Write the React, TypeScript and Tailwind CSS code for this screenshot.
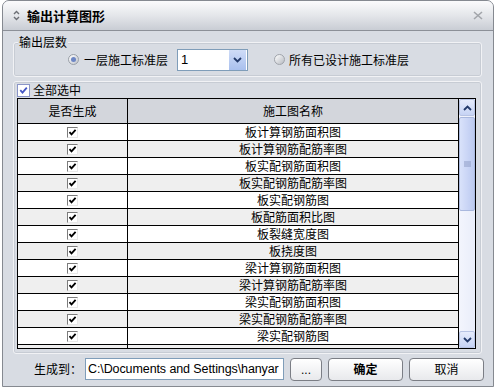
import React from "react";

const rows = [
  "板计算钢筋面积图",
  "板计算钢筋配筋率图",
  "板实配钢筋面积图",
  "板实配钢筋配筋率图",
  "板实配钢筋图",
  "板配筋面积比图",
  "板裂缝宽度图",
  "板挠度图",
  "梁计算钢筋面积图",
  "梁计算钢筋配筋率图",
  "梁实配钢筋面积图",
  "梁实配钢筋配筋率图",
  "梁实配钢筋图",
  "",
];

const cjk = { fontFamily: '"Noto Sans CJK SC", "Noto Sans", sans-serif' };

function SmallCheck() {
  return (
    <div className="w-[11px] h-[11px] bg-white border border-t-[#7c7c7c] border-l-[#7c7c7c] border-r-[#e8e8e8] border-b-[#e8e8e8] flex items-center justify-center">
      <svg width="9" height="9" viewBox="0 0 9 9">
        <path d="M1.5 4.2 L3.5 6.4 L7.6 1.8" stroke="#000" strokeWidth="1.8" fill="none" />
      </svg>
    </div>
  );
}

function Chevron({ up }: { up?: boolean }) {
  return (
    <svg width="9" height="6" viewBox="0 0 9 6">
      <path
        d={up ? "M1 5 L4.5 1.5 L8 5" : "M1 1 L4.5 4.5 L8 1"}
        stroke="#233a6a"
        strokeWidth="1.8"
        fill="none"
      />
    </svg>
  );
}

export default function App() {
  return (
    <div className="w-[496px] h-[389px] bg-white" style={cjk}>
      <div className="ml-[2px] w-[492px] h-[387px] border border-[#858990] rounded-t-[7px] overflow-hidden bg-[#d8dce3] flex flex-col">
        {/* Title bar */}
        <div className="h-[30px] shrink-0 border-b border-[#8c9098] bg-gradient-to-b from-[#fbfbfc] via-[#e4e6ea] to-[#c9cdd4] flex items-center">
          <svg className="ml-[10px]" width="7" height="11" viewBox="0 0 7 11">
            <path d="M1 4 L3.5 1.5 L6 4" stroke="#6c6f75" strokeWidth="1.4" fill="none" />
            <path d="M1 7 L3.5 9.5 L6 7" stroke="#6c6f75" strokeWidth="1.4" fill="none" />
          </svg>
          <span className="ml-[7px] text-[13px] font-bold text-black leading-none">输出计算图形</span>
          <div className="flex-1" />
          <svg className="mr-[10px]" width="10" height="9" viewBox="0 0 10 9">
            <path d="M1 1 L9 8 M9 1 L1 8" stroke="#a2a5aa" strokeWidth="1.6" />
          </svg>
        </div>

        {/* Body */}
        <div className="flex-1 pl-[10px] pr-[11px] flex flex-col">
          {/* Group 1 */}
          <div className="relative mt-[11px] h-[35px] border border-[#f1f2f5] rounded-[3px] shadow-[inset_0_0_0_1px_rgba(170,174,182,0.35)]">
            <span className="absolute left-[4px] top-[-9px] px-[1px] bg-[#d8dce3] text-[12px] leading-[16px] text-black">
              输出层数
            </span>
            <div className="h-full flex items-center pl-[54px] text-[12px] text-black">
              <div className="w-[11px] h-[11px] rounded-full border border-[#9aa0a8] bg-gradient-to-br from-white to-[#c0c4cc] flex items-center justify-center">
                <div className="w-[5px] h-[5px] rounded-full bg-[#6d86c4]" />
              </div>
              <span className="ml-[5px]">一层施工标准层</span>
              <div className="ml-[9px] w-[71px] h-[22px] border border-[#7f9db9] bg-white flex items-center">
                <span className="ml-[3px] text-[13px] leading-none" style={{ fontFamily: '"Liberation Sans", sans-serif' }}>
                  1
                </span>
                <div className="flex-1" />
                <div className="w-[17px] h-[20px] mr-[1px] bg-gradient-to-b from-[#cfdcf7] to-[#a9c0ee] flex items-center justify-center">
                  <Chevron />
                </div>
              </div>
              <div className="ml-[26px] w-[11px] h-[11px] rounded-full border border-[#a0a4ab] bg-gradient-to-br from-white to-[#b7bbc2]" />
              <span className="ml-[4px]">所有已设计施工标准层</span>
            </div>
          </div>

          {/* Group 2 */}
          <div className="mt-[4px] h-[273px] border border-[#f1f2f5] rounded-[3px] shadow-[inset_0_0_0_1px_rgba(170,174,182,0.35)] pl-[3px] flex flex-col">
            <div className="h-[16px] flex items-center text-[12px] text-black">
              <div className="w-[13px] h-[13px] bg-white border border-[#8a95c8] flex items-center justify-center">
                <svg width="9" height="9" viewBox="0 0 9 9">
                  <path d="M1.3 4.2 L3.5 6.6 L7.8 1.6" stroke="#4557c4" strokeWidth="1.8" fill="none" />
                </svg>
              </div>
              <span className="ml-[3px]">全部选中</span>
            </div>

            {/* Table */}
            <div className="w-[459px] h-[251px] border border-black bg-white flex overflow-hidden">
              <div className="w-[440px] flex flex-col">
                <div className="h-[25px] shrink-0 flex bg-[#d3d6dc] border-b border-black text-[12px] text-black">
                  <div className="w-[110px] border-r border-black flex items-center justify-center">是否生成</div>
                  <div className="flex-1 flex items-center justify-center">施工图名称</div>
                </div>
                {rows.map((r, i) => (
                  <div
                    key={i}
                    className={`h-[17px] shrink-0 flex border-b border-black text-[12px] text-black ${i % 2 === 1 ? "bg-[#efefef]" : "bg-white"}`}
                  >
                    <div className="w-[110px] border-r border-black flex items-center justify-center">
                      <SmallCheck />
                    </div>
                    <div className="flex-1 flex items-center justify-center leading-none">{r}</div>
                  </div>
                ))}
              </div>
              {/* Scrollbar */}
              <div className="w-[17px] border-l border-black flex flex-col bg-gradient-to-r from-[#f3f5fd] to-[#e9edfa]">
                <div className="h-[17px] shrink-0 border border-[#b8c4e4] rounded-[2px] bg-gradient-to-b from-[#e6ecfc] to-[#c6d3f4] flex items-center justify-center">
                  <Chevron up />
                </div>
                <div className="h-[94px] shrink-0 mt-[1px] border border-[#a9b8de] rounded-[2px] bg-gradient-to-r from-[#d9e2fa] via-[#cbd6f6] to-[#bccaf0] flex items-center justify-center">
                  <svg width="7" height="7" viewBox="0 0 7 7">
                    <path d="M0 1 H7 M0 3 H7 M0 5 H7" stroke="#8e9cc4" strokeWidth="1" />
                  </svg>
                </div>
                <div className="flex-1" />
                <div className="h-[17px] shrink-0 border border-[#b8c4e4] rounded-[2px] bg-gradient-to-b from-[#e6ecfc] to-[#c6d3f4] flex items-center justify-center">
                  <Chevron />
                </div>
              </div>
            </div>
          </div>

          {/* Bottom row */}
          <div className="mt-[3px] h-[24px] flex items-center text-[12px] text-black">
            <span className="ml-[21px] whitespace-nowrap shrink-0">生成到：</span>
            <div className="ml-[3px] w-[199px] shrink-0 h-[22px] border border-[#7f9db9] bg-white flex items-center overflow-hidden">
              <span
                className="ml-[2px] whitespace-nowrap text-[12.5px] leading-none"
                style={{ fontFamily: '"Liberation Sans", sans-serif', letterSpacing: "-0.1px" }}
              >
                C:\Documents and Settings\hanyar
              </span>
            </div>
            <div
              className="ml-[6px] shrink-0 w-[32px] h-[23px] rounded-[4px] border border-[#7b7e85] bg-gradient-to-b from-white to-[#e8e9ec] flex items-end justify-center pb-[4px] text-[12px] leading-none"
              style={{ fontFamily: '"Liberation Sans", sans-serif' }}
            >
              ...
            </div>
            <div className="ml-[6px] shrink-0 w-[75px] h-[23px] rounded-[4px] border border-[#7b7e85] bg-gradient-to-b from-white to-[#e8e9ec] flex items-center justify-center font-bold">
              确定
            </div>
            <div className="ml-[6px] shrink-0 w-[75px] h-[23px] rounded-[4px] border border-[#7b7e85] bg-gradient-to-b from-white to-[#e8e9ec] flex items-center justify-center">
              取消
            </div>
          </div>
        </div>
      </div>
    </div>
  );
}
